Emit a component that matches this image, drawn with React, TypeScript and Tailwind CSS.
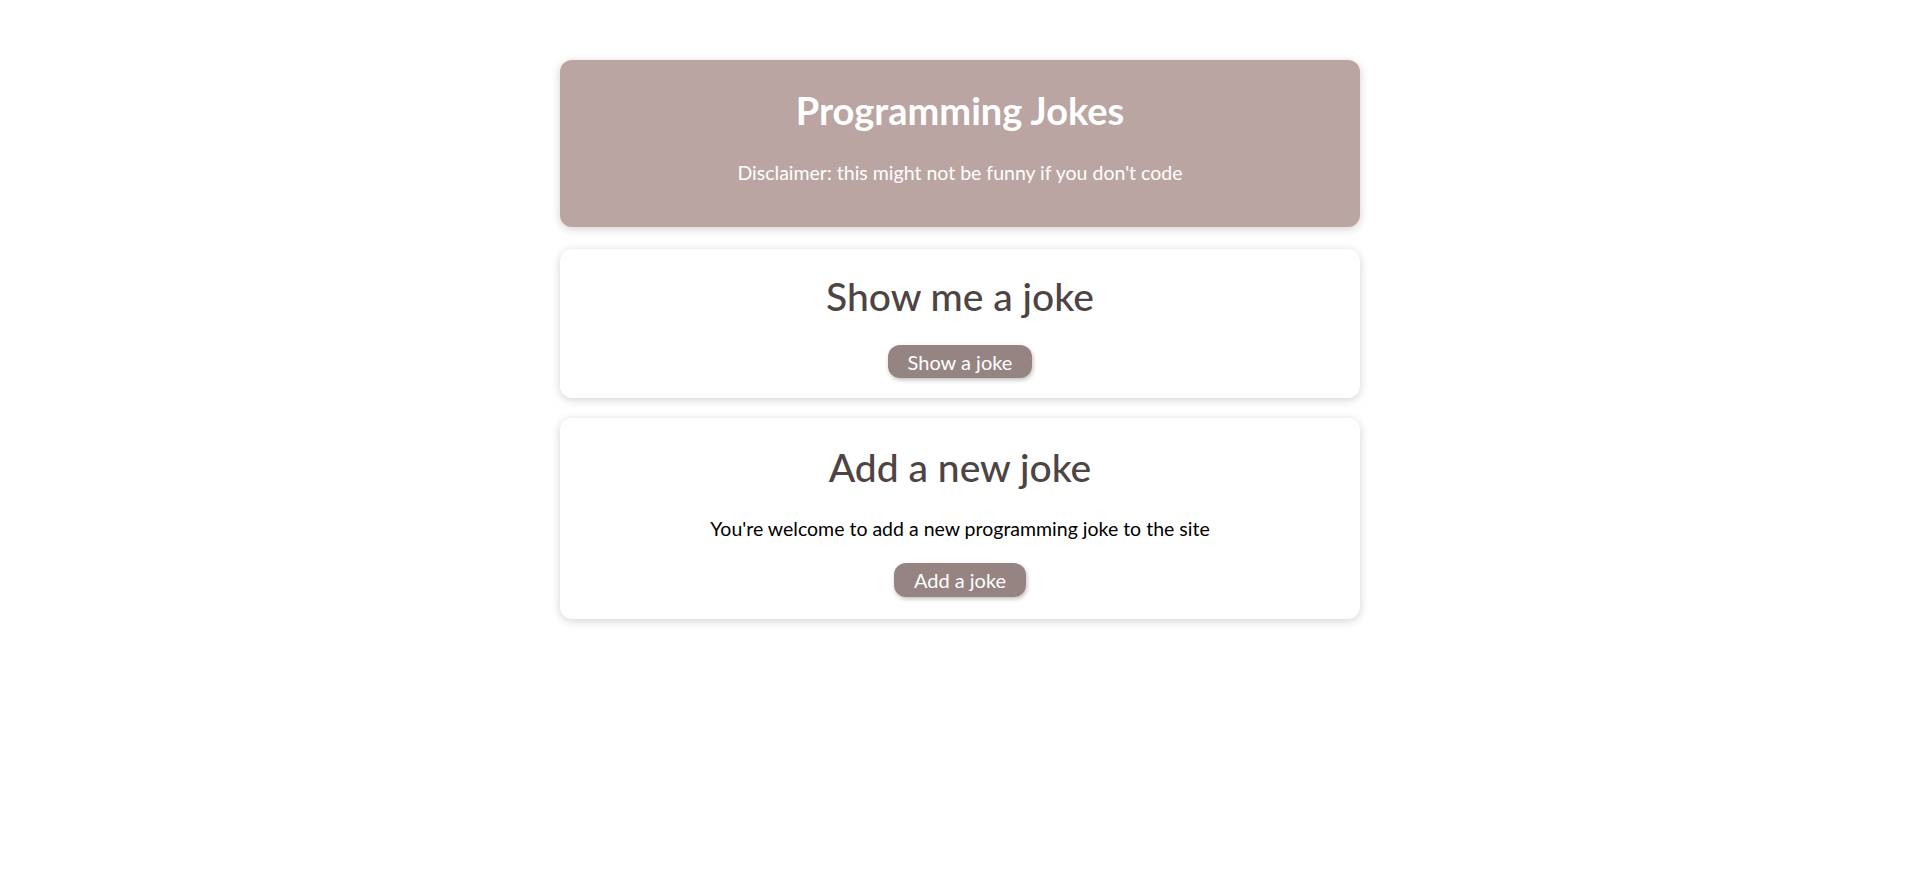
import React from 'react';

const font = { fontFamily: 'Lato, "Open Sans", sans-serif' };

export default function App() {
  return (
    <div className="min-h-screen bg-white" style={font}>
      <main className="w-[800px] mx-auto pt-[60px] flex flex-col">
        {/* Шапка */}
        <header className="bg-[#bba5a3] rounded-xl text-center text-white pt-[25px] pb-[40px] shadow-[0_2px_10px_rgba(0,0,0,0.18)]">
          <h1 className="text-[38px] leading-[50px] font-bold">Programming Jokes</h1>
          <p className="mt-[24px] text-[19.5px] leading-[28px]">Disclaimer: this might not be funny if you don't code</p>
        </header>

        {/* Показать шутку */}
        <section className="mt-[22px] bg-white rounded-xl text-center pt-[23px] pb-[20px] shadow-[0_2px_10px_rgba(0,0,0,0.18)]">
          <h2 className="text-[39px] leading-[48px] font-medium text-[#4d4443]">Show me a joke</h2>
          <button className="mt-[25px] h-[33px] px-5 rounded-xl bg-[#968482] text-white text-[20px] leading-none shadow-[1px_2px_4px_rgba(0,0,0,0.25)]">
            Show a joke
          </button>
        </section>

        {/* Добавить шутку */}
        <section className="mt-[20px] bg-white rounded-xl text-center pt-[25px] pb-[22px] shadow-[0_2px_10px_rgba(0,0,0,0.18)]">
          <h2 className="text-[39px] leading-[48px] font-medium text-[#4d4443]">Add a new joke</h2>
          <p className="mt-[24px] text-[19.5px] leading-[28px] text-black">You're welcome to add a new programming joke to the site</p>
          <button className="mt-[20px] h-[34px] px-5 rounded-xl bg-[#968482] text-white text-[20px] leading-none shadow-[1px_2px_4px_rgba(0,0,0,0.25)]">
            Add a joke
          </button>
        </section>
      </main>
    </div>
  );
}
